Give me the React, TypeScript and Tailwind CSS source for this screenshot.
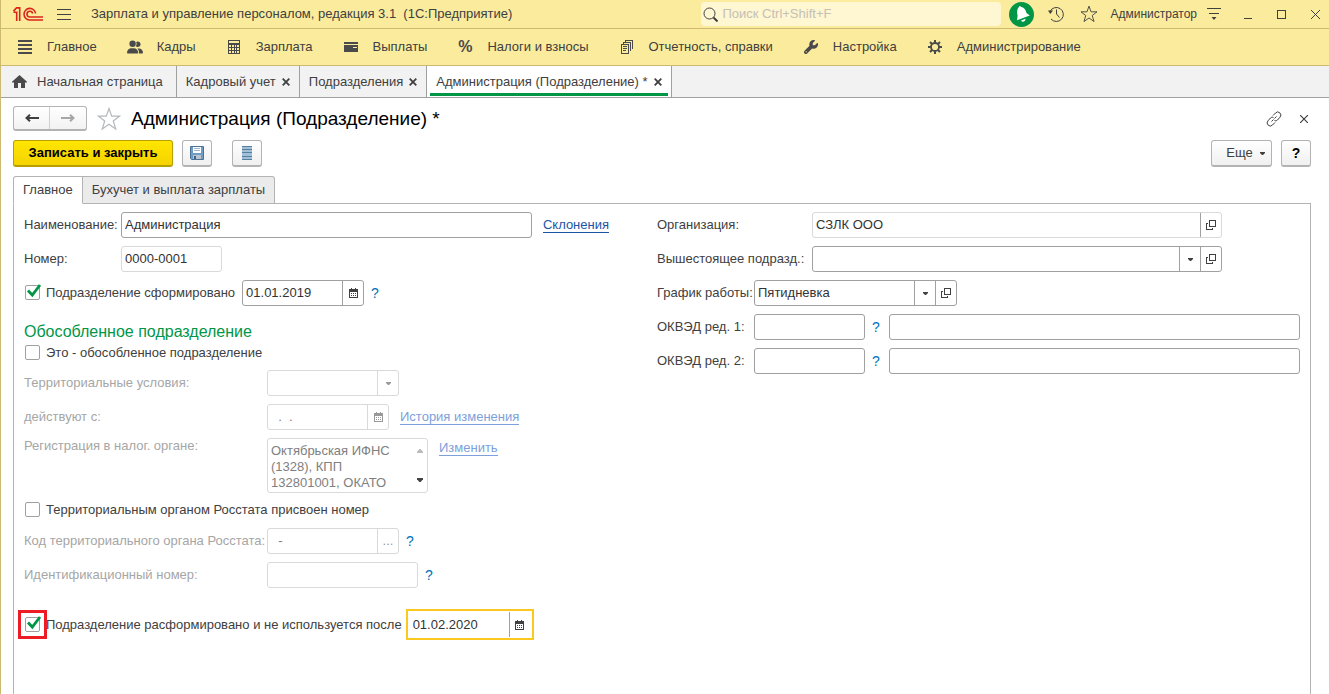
import { useState } from "react"
import type { ReactNode } from "react"
import { FaWrench, FaUserGroup } from "react-icons/fa6"

type Tone = "normal" | "light" | "focus"

const frames: Record<Tone, string> = {
  normal: "h-[26px] rounded-[3px] border border-[#a0a0a0]",
  light: "h-[26px] rounded-[3px] border border-[#d9d9d9]",
  focus: "h-[31px] border-2 border-[#fac81e] py-[1px] pr-[2px]",
}

const link = "border-b border-current leading-[14px]"
const cell = "flex w-[21px] shrink-0 items-center justify-center border-l"

function Logo() {
  return (
    <svg className="h-[14px] w-[30px] shrink-0" viewBox="0 0 30 14" fill="none" stroke="#d9261c" strokeWidth="1.6">
      <path d="M.5 5.300h3.200V14M.5 4.200 3.500.9h3.200V14" />
      <path d="M22.600 6.500A5.800 5.800 0 1 0 16.500 13H30" />
      <path d="M19.700 6.500A2.900 2.900 0 1 0 16.800 10H30" />
    </svg>
  )
}

function Triangle({ up, className = "h-[3px] w-[5px]" }: { up?: boolean; className?: string }) {
  return (
    <svg className={className} viewBox="0 0 5 3" fill="currentColor" preserveAspectRatio="none">
      <path d={up ? "M0 3h5V2L3 0H2L0 2z" : "M0 0h5v1L3 3H2L0 1z"} />
    </svg>
  )
}

function CalendarIcon() {
  return (
    <svg className="h-[10px] w-[9px]" viewBox="0 0 9 10" shapeRendering="crispEdges" fill="currentColor">
      <path d="M0 1h2V0h1v1h3V0h1v1h2v9H0zM1 4v5h7V4z" fillRule="evenodd" />
      <path d="M2 5h1v1H2zM4 5h1v1H4zM6 5h1v1H6zM2 7h1v1H2zM4 7h1v1H4zM6 7h1v1H6z" />
    </svg>
  )
}

function OpenIcon() {
  return (
    <svg className="h-[10px] w-[10px]" viewBox="0 0 10 10" fill="none" stroke="currentColor" shapeRendering="crispEdges">
      <path d="M3.500.5h6v6h-6z" />
      <path d="M2 3.500H.5v6h6V8" />
    </svg>
  )
}

function HomeIcon() {
  return (
    <svg className="h-[13px] w-[15px] text-[#4a4a4a]" viewBox="0 0 15 13" fill="currentColor">
      <path d="M7.500 0 15 6.800V7.500h-2V13H9V8H6v5H2V7.500H0V6.800z" />
    </svg>
  )
}

function CrossIcon() {
  return (
    <svg className="h-2 w-2" viewBox="0 0 8 8" fill="none" stroke="currentColor" strokeWidth="1.8">
      <path d="M.7.7l6.600 6.600M7.300.7.7 7.300" />
    </svg>
  )
}

function StarIcon({ className = "" }: { className?: string }) {
  return (
    <svg className={className} viewBox="0 0 24 24" fill="none" stroke="currentColor" strokeWidth="1.2">
      <path d="M12 1.500l2.700 7.600h8L16.300 14l2.400 8L12 17.300 5.300 22l2.400-8-6.400-4.900h8z" />
    </svg>
  )
}

const sections: { title: string; icon: ReactNode }[] = [
  {
    title: "Главное",
    icon: (
      <svg className="h-[14px] w-[14px]" viewBox="0 0 14 14" fill="currentColor" shapeRendering="crispEdges">
        <path d="M0 0h14v2H0zM0 4h14v2H0zM0 8h14v2H0zM0 12h14v2H0z" />
      </svg>
    ),
  },
  { title: "Кадры", icon: <FaUserGroup className="h-4 w-4" /> },
  {
    title: "Зарплата",
    icon: (
      <svg className="h-[14px] w-3" viewBox="0 0 12 14" fill="currentColor" shapeRendering="crispEdges">
        <path fillRule="evenodd" d="M0 0h12v14H0zM1 1v2h10V1zM1 5v2h2V5zM4 5v2h2V5zM7 5v2h1V5zM9 5v2h2V5zM1 8v2h2V8zM4 8v2h2V8zM7 8v2h1V8zM9 8v2h2V8zM1 11v2h2v-2zM4 11v2h2v-2zM7 11v2h1v-2zM9 11v2h2v-2z" />
      </svg>
    ),
  },
  {
    title: "Выплаты",
    icon: (
      <svg className="h-[10px] w-[14px]" viewBox="0 0 14 10" fill="currentColor" shapeRendering="crispEdges">
        <path fillRule="evenodd" d="M0 0h14v2H0zM0 3h14v7H0zM9 5v1h4V5z" />
      </svg>
    ),
  },
  { title: "Налоги и взносы", icon: <span className="text-base font-bold">%</span> },
  {
    title: "Отчетность, справки",
    icon: (
      <svg className="h-[14px] w-3" viewBox="0 0 12 14" fill="none" stroke="currentColor" shapeRendering="crispEdges">
        <path d="M.5 4.500h7v9h-7zM2.500 4V2.500h7V11M4.500 2V.5h7V9M2 6.500h4M2 8.500h4M2 10.500h3" />
      </svg>
    ),
  },
  { title: "Настройка", icon: <FaWrench className="h-[14px] w-[14px]" /> },
  {
    title: "Администрирование",
    icon: (
      <svg className="h-[14px] w-[14px]" viewBox="0 0 14 14" fill="none" stroke="currentColor">
        <circle cx="7" cy="7" r="4" strokeWidth="1.800" />
        <path strokeWidth="2" d="M7 0v3M7 11v3M0 7h3M11 7h3M2 2l2 2M10 10l2 2M12 2l-2 2M4 10l-2 2" />
      </svg>
    ),
  },
]

function TitleBar() {
  return (
    <header className="flex h-[29px] items-center border-b border-[#cdb970] bg-[#fbec9d] pr-[9px] pl-3">
      <Logo />
      <button type="button" aria-label="Меню" className="ml-[14px]">
        <svg className="h-[11px] w-[14px]" viewBox="0 0 14 11" stroke="currentColor" shapeRendering="crispEdges">
          <path d="M0 .5h14M0 5.500h14M0 10.500h14" />
        </svg>
      </button>
      <h1 className="ml-5 flex-1 whitespace-pre">Зарплата и управление персоналом, редакция 3.1  (1С:Предприятие)</h1>
      <label className="flex h-6 w-[300px] items-center gap-1 rounded-sm bg-[#fff6d2] px-[2px]">
        <svg className="h-[15px] w-[15px]" viewBox="0 0 15 15" fill="none" stroke="currentColor">
          <circle cx="6.500" cy="6.500" r="5.500" />
          <path strokeWidth="2" d="m10.500 10.500 4 4" />
        </svg>
        <input
          aria-label="Поиск"
          placeholder="Поиск Ctrl+Shift+F"
          className="min-w-0 flex-1 bg-transparent outline-none placeholder:text-[#c3c1b5]"
        />
      </label>
      <button type="button" aria-label="Уведомления" className="ml-2 flex h-[25px] w-[25px] items-center justify-center rounded-full bg-[#009646]">
        <svg className="h-[18px] w-[18px] text-white" viewBox="0 0 18 18" fill="currentColor">
          <path d="M5.500 2.400 6.800.8l1.300 1.100c3.500.6 4.600 3.400 5.400 6l3.300 2.700L4 15.200l.6-4.400C4 7.600 3.600 4.600 5.500 2.400z" />
          <path d="M8 15.400l4.500-1.600c.2 2.800-3.100 3.900-4.500 1.600z" />
        </svg>
      </button>
      <button type="button" aria-label="История" className="ml-[14px]">
        <svg className="h-4 w-4" viewBox="0 0 16 16" fill="none" stroke="currentColor">
          <path d="M2 5.500A7 7 0 1 1 3 13M8.500 3.500V8l3 3.500" />
          <path d="M0 4.500h5L2.300 8z" fill="currentColor" stroke="none" />
        </svg>
      </button>
      <button type="button" aria-label="Избранное" className="ml-4">
        <StarIcon className="h-[18px] w-[18px]" />
      </button>
      <span className="ml-3 text-xs">Администратор</span>
      <button type="button" aria-label="Настройки" className="ml-[9px]">
        <svg className="h-3 w-4" viewBox="0 0 16 12" stroke="currentColor">
          <path d="M1 .5h14M3 5.500h10" shapeRendering="crispEdges" />
          <path d="M5.500 9h5L8 12z" fill="currentColor" stroke="none" />
        </svg>
      </button>
      <div className="ml-[22px] flex items-center gap-[25px]">
        <button type="button" aria-label="Свернуть">
          <svg className="h-[9px] w-2" viewBox="0 0 8 9" stroke="currentColor" shapeRendering="crispEdges">
            <path d="M0 8.500h8" />
          </svg>
        </button>
        <button type="button" aria-label="Развернуть">
          <svg className="h-[9px] w-[9px]" viewBox="0 0 9 9" fill="none" stroke="currentColor" shapeRendering="crispEdges">
            <path d="M.5.5h8v8h-8z" />
          </svg>
        </button>
        <button type="button" aria-label="Закрыть">
          <svg className="h-[9px] w-[9px]" viewBox="0 0 9 9" stroke="currentColor">
            <path d="m0 0 9 9M9 0 0 9" />
          </svg>
        </button>
      </div>
    </header>
  )
}

function SectionBar() {
  return (
    <nav className="flex h-[37px] items-center gap-[30px] border-b border-[#cdb970] bg-[#fbec9d] px-4">
      {sections.map((s) => (
        <a key={s.title} href="#" className="flex items-center gap-[14px] whitespace-nowrap">
          <span className="flex h-4 w-4 items-center justify-center text-[#4a4a4a]">{s.icon}</span>
          {s.title}
        </a>
      ))}
    </nav>
  )
}

const windows = ["Кадровый учет", "Подразделения", "Администрация (Подразделение) *"]

function WindowTabs() {
  return (
    <nav className="flex h-8 border-b border-[#a0a0a0] bg-[#f2f2f2]">
      <a href="#" className="flex items-center gap-[10px] border-r border-[#a0a0a0] pr-[13px] pl-[11px]">
        <HomeIcon />
        Начальная страница
      </a>
      {windows.map((title, i) => {
        const active = i === windows.length - 1
        return (
          <div key={title} className={`flex border-r border-[#a0a0a0] px-[3px] ${active ? "bg-white" : ""}`}>
            <div className={`mb-px flex items-center gap-[6px] border-b-3 px-[6px] pt-1 ${active ? "border-[#009646]" : "border-transparent"}`}>
              <a href="#">{title}</a>
              <button type="button" aria-label="Закрыть вкладку">
                <CrossIcon />
              </button>
            </div>
          </div>
        )
      })}
    </nav>
  )
}

function Heading() {
  return (
    <div className="flex h-[25px] items-center">
      <div className="flex h-[25px] overflow-hidden rounded-[3px] border border-b-2 border-[#b3b3b3] bg-linear-to-b from-white to-[#f2f2f2]">
        <button type="button" aria-label="Назад" className="flex w-9 items-center justify-center border-r border-[#d0d0d0]">
          <svg className="h-2 w-[14px]" viewBox="0 0 14 8" fill="none" stroke="currentColor" strokeWidth="2">
            <path d="M14 4H2M5 .7 1.500 4 5 7.300" />
          </svg>
        </button>
        <button type="button" aria-label="Вперед" className="flex w-9 items-center justify-center text-[#a6a6a6]">
          <svg className="h-2 w-[14px]" viewBox="0 0 14 8" fill="none" stroke="currentColor" strokeWidth="2">
            <path d="M0 4h12M9 .7 12.500 4 9 7.300" />
          </svg>
        </button>
      </div>
      <button type="button" aria-label="В избранное" className="ml-[10px] text-[#b3b8bd]">
        <StarIcon className="h-6 w-6" />
      </button>
      <h2 className="ml-[10px] flex-1 text-[19px] text-black">Администрация (Подразделение) *</h2>
      <button type="button" aria-label="Ссылка">
        <svg className="h-4 w-4" viewBox="0 0 16 16" fill="none" stroke="currentColor">
          <path d="M7 4.500 9.500 2a3 3 0 0 1 4.500 4.200L11.500 9C10.600 9.900 9.400 10 8.500 9.500M9 11.500 6.500 14A3 3 0 0 1 2 9.800L4.500 7C5.400 6.100 6.600 6 7.500 6.500M5.500 10.500l2-2M8.500 7.500l2-2" />
        </svg>
      </button>
      <button type="button" aria-label="Закрыть" className="mr-[3px] ml-[18px]">
        <svg className="h-2 w-2" viewBox="0 0 8 8" stroke="currentColor" strokeWidth="1.200">
          <path d="m0 0 8 8M8 0 0 8" />
        </svg>
      </button>
    </div>
  )
}

const toolButton =
  "flex h-[27px] items-center justify-center rounded-[3px] border border-b-2 border-[#b3b3b3] bg-linear-to-b from-white to-[#f0f0f0]"

function Toolbar() {
  return (
    <div className="mt-[9px] flex">
      <button
        type="button"
        className="h-[27px] w-40 rounded-[3px] border border-b-2 border-[#b89f00] bg-linear-to-b from-[#ffe600] to-[#f5d300] font-bold text-black"
      >
        Записать и закрыть
      </button>
      <button type="button" aria-label="Записать" className={`${toolButton} ml-[9px] w-[30px]`}>
        <svg className="h-[14px] w-[14px]" viewBox="0 0 14 14">
          <path d="M.5.5h13v13h-12l-1-1z" fill="#6f9cc4" stroke="#4a7196" />
          <path d="M3 1h8v6H3z" fill="#fff" />
          <path d="M4 2.500h6M4 4.500h6" stroke="#9fb4c8" />
          <path d="M3 9h8v4H3z" fill="#b9c4cc" />
          <path d="M4 10h2v3H4z" fill="#3f6488" />
        </svg>
      </button>
      <button type="button" aria-label="Список" className={`${toolButton} ml-5 w-[30px]`}>
        <svg className="h-[14px] w-[10px]" viewBox="0 0 10 14" shapeRendering="crispEdges">
          <path d="M0 0h10v14H0z" fill="#a3c0d8" />
          <path d="M0 .5h10M0 3.500h10M0 6.500h10M0 10.500h10M0 13.500h10" stroke="#56809f" />
        </svg>
      </button>
      <button type="button" className={`${toolButton} ml-auto w-[61px] gap-[7px] pl-2`}>
        Еще
        <Triangle />
      </button>
      <button type="button" className={`${toolButton} ml-[9px] w-[30px] text-sm font-bold text-black`}>
        ?
      </button>
    </div>
  )
}

function Field({ id, value = "", tone = "normal", className = "", muted, children }: {
  id: string
  value?: string
  tone?: Tone
  className?: string
  muted?: boolean
  children?: ReactNode
}) {
  return (
    <div className={`flex shrink-0 bg-white ${frames[tone]} ${className}`}>
      <input
        id={id}
        defaultValue={value}
        disabled={muted}
        className={`min-w-0 flex-1 bg-transparent outline-none ${tone === "focus" ? "px-[5px]" : "px-[3px]"} ${muted ? "text-[#808080]" : "text-[#333]"}`}
      />
      {children}
    </div>
  )
}

function Select({ id, value = "", muted }: { id: string; value?: string; muted?: boolean }) {
  return (
    <div className="grid min-w-0 flex-1 items-stretch">
      <select id={id} disabled={muted} className="col-start-1 row-start-1 appearance-none bg-transparent px-[3px] text-[#333] outline-none">
        <option>{value}</option>
      </select>
      <span className={`${cell} pointer-events-none col-start-1 row-start-1 justify-self-end ${muted ? "border-[#d9d9d9] text-[#999]" : "border-[#a0a0a0]"}`}>
        <Triangle />
      </span>
    </div>
  )
}

function CellButton({ label, muted, children }: { label: string; muted?: boolean; children: ReactNode }) {
  return (
    <button type="button" aria-label={label} className={`${cell} ${muted ? "border-[#d9d9d9] text-[#999]" : "border-[#a0a0a0]"}`}>
      {children}
    </button>
  )
}

function Check({ label, checked = false, marked }: { label: string; checked?: boolean; marked?: boolean }) {
  const [on, setOn] = useState(checked)
  return (
    <label className="flex h-4 items-start gap-[6px] whitespace-nowrap pl-px">
      <span className={`grid ${marked ? "outline-3 outline-offset-4 outline-[#ed1c24]" : ""}`}>
        <input
          type="checkbox"
          checked={on}
          onChange={(e) => setOn(e.target.checked)}
          className="col-start-1 row-start-1 h-[15px] w-[15px] appearance-none rounded-[2px] border border-[#a0a0a0] bg-white"
        />
        {on && (
          <svg className="pointer-events-none col-start-1 row-start-1 h-[15px] w-[15px] overflow-visible" viewBox="0 0 15 15" fill="none" stroke="#009646" strokeWidth="2.800">
            <path d="M3 5.500l4.300 4.500L15 0" />
          </svg>
        )}
      </span>
      {label}
    </label>
  )
}

function Hint() {
  return (
    <button type="button" aria-label="Подсказка" className="w-[7px] text-sm text-[#0072bc]">
      ?
    </button>
  )
}

function DepartmentForm() {
  return (
    <div className="flex flex-col">
      <div className="flex items-center">
        <label htmlFor="name" className="w-[97px]">Наименование:</label>
        <Field id="name" value="Администрация" className="flex-1 shrink" />
        <a href="#" className={`${link} mr-12 ml-[11px] text-[#1a55a5]`}>Склонения</a>
      </div>
      <div className="mt-2 flex items-center">
        <label htmlFor="number" className="w-[97px]">Номер:</label>
        <Field id="number" value="0000-0001" tone="light" className="w-[101px]" />
      </div>
      <div className="mt-2 flex items-center">
        <Check label="Подразделение сформировано" checked />
        <Field id="formed" value="01.01.2019" className="mr-[7px] ml-[7px] w-[122px]">
          <CellButton label="Календарь"><CalendarIcon /></CellButton>
        </Field>
        <Hint />
      </div>

      <h3 className="mt-4 text-base leading-[19px] text-[#009646]">Обособленное подразделение</h3>
      <div className="mt-1">
        <Check label="Это - обособленное подразделение" />
      </div>
      <div className="mt-[9px] grid grid-cols-[243px_1fr] gap-y-2 text-[#a6a6a6]">
        <label htmlFor="terms" className="self-center">Территориальные условия:</label>
        <div className={`flex w-[132px] ${frames.light}`}>
          <Select id="terms" muted />
        </div>
        <label htmlFor="since" className="self-center">действуют с:</label>
        <div className="flex items-center gap-[11px]">
          <Field id="since" value="  .  ." tone="light" muted className="w-[122px]">
            <CellButton label="Календарь" muted><CalendarIcon /></CellButton>
          </Field>
          <a href="#" className={`${link} text-[#7d9fdc]`}>История изменения</a>
        </div>
        <label htmlFor="tax">Регистрация в налог. органе:</label>
        <div className="flex items-start gap-[11px]">
          <div className="flex h-[55px] w-[161px] rounded-[3px] border border-[#d9d9d9]">
            <textarea
              id="tax"
              disabled
              defaultValue="Октябрьская ИФНС (1328), КПП 132801001, ОКАТО"
              className="min-w-0 flex-1 resize-none overflow-hidden pt-1 pl-[3px] leading-4 text-[#808080]"
            />
            <div className="flex w-[15px] flex-col items-center justify-between py-[10px]">
              <Triangle up className="h-1 w-[6px] text-[#bbb]" />
              <Triangle className="h-1 w-[6px] text-[#444]" />
            </div>
          </div>
          <a href="#" className={`${link} mt-[3px] text-[#7d9fdc]`}>Изменить</a>
        </div>
      </div>
      <div className="mt-[9px]">
        <Check label="Территориальным органом Росстата присвоен номер" />
      </div>
      <div className="mt-[10px] grid grid-cols-[243px_1fr] items-center gap-y-2 text-[#a6a6a6]">
        <label htmlFor="code" className="whitespace-nowrap">Код территориального органа Росстата:</label>
        <div className="flex items-center gap-[7px]">
          <Field id="code" value="  -" tone="light" muted className="w-[132px]">
            <CellButton label="Выбрать" muted>...</CellButton>
          </Field>
          <Hint />
        </div>
        <label htmlFor="ident">Идентификационный номер:</label>
        <div className="flex items-center gap-[7px]">
          <Field id="ident" tone="light" muted className="w-[151px]" />
          <Hint />
        </div>
      </div>
      <div className="mt-[21px] flex items-center">
        <Check label="Подразделение расформировано и не используется после" checked marked />
        <Field id="disbanded" value="01.02.2020" tone="focus" className="ml-1 w-32">
          <CellButton label="Календарь"><CalendarIcon /></CellButton>
        </Field>
      </div>
    </div>
  )
}

function OrganizationForm() {
  return (
    <div className="flex flex-col gap-2">
      <div className="flex items-center pr-[78px]">
        <label htmlFor="org" className="w-[155px]">Организация:</label>
        <Field id="org" value="СЗЛК ООО" tone="light" className="flex-1 shrink">
          <CellButton label="Открыть"><OpenIcon /></CellButton>
        </Field>
      </div>
      <div className="flex items-center pr-[78px]">
        <label htmlFor="parent" className="w-[155px] whitespace-nowrap">Вышестоящее подразд.:</label>
        <div className={`flex flex-1 ${frames.normal}`}>
          <Select id="parent" />
          <CellButton label="Открыть"><OpenIcon /></CellButton>
        </div>
      </div>
      <div className="flex items-center">
        <label htmlFor="schedule" className="w-[97px]">График работы:</label>
        <div className={`flex w-[203px] ${frames.normal}`}>
          <Select id="schedule" value="Пятидневка" />
          <CellButton label="Открыть"><OpenIcon /></CellButton>
        </div>
      </div>
      {[1, 2].map((n) => (
        <div key={n} className="flex items-center">
          <label htmlFor={`okved${n}`} className="w-[97px]">ОКВЭД ред. {n}:</label>
          <Field id={`okved${n}`} className="mr-[7px] w-[111px]" />
          <Hint />
          <Field id={`okved${n}-name`} className="ml-[10px] flex-1 shrink" />
        </div>
      ))}
    </div>
  )
}

export default function App() {
  return (
    <div className="flex min-h-screen flex-col border-l border-[#cdb970] bg-white font-['Liberation_Sans',Arial,sans-serif] text-[13px] leading-4 text-[#404040]">
      <TitleBar />
      <SectionBar />
      <WindowTabs />
      <main className="flex flex-1 flex-col pt-2 pr-[18px] pl-3">
        <Heading />
        <Toolbar />
        <div role="tablist" className="z-10 mt-[9px] -mb-px flex">
          <button type="button" role="tab" aria-selected="true" className="h-7 rounded-tl-[3px] border border-[#b3b3b3] border-b-white bg-white px-[9px]">
            Главное
          </button>
          <button type="button" role="tab" aria-selected="false" className="h-7 rounded-tr-[3px] border border-l-0 border-[#b3b3b3] bg-[#ebebeb] px-[9px]">
            Бухучет и выплата зарплаты
          </button>
        </div>
        <div className="grid flex-1 grid-cols-[633fr_643fr] items-start border border-b-0 border-[#b3b3b3] px-[10px] pt-2">
          <DepartmentForm />
          <OrganizationForm />
        </div>
      </main>
    </div>
  )
}
